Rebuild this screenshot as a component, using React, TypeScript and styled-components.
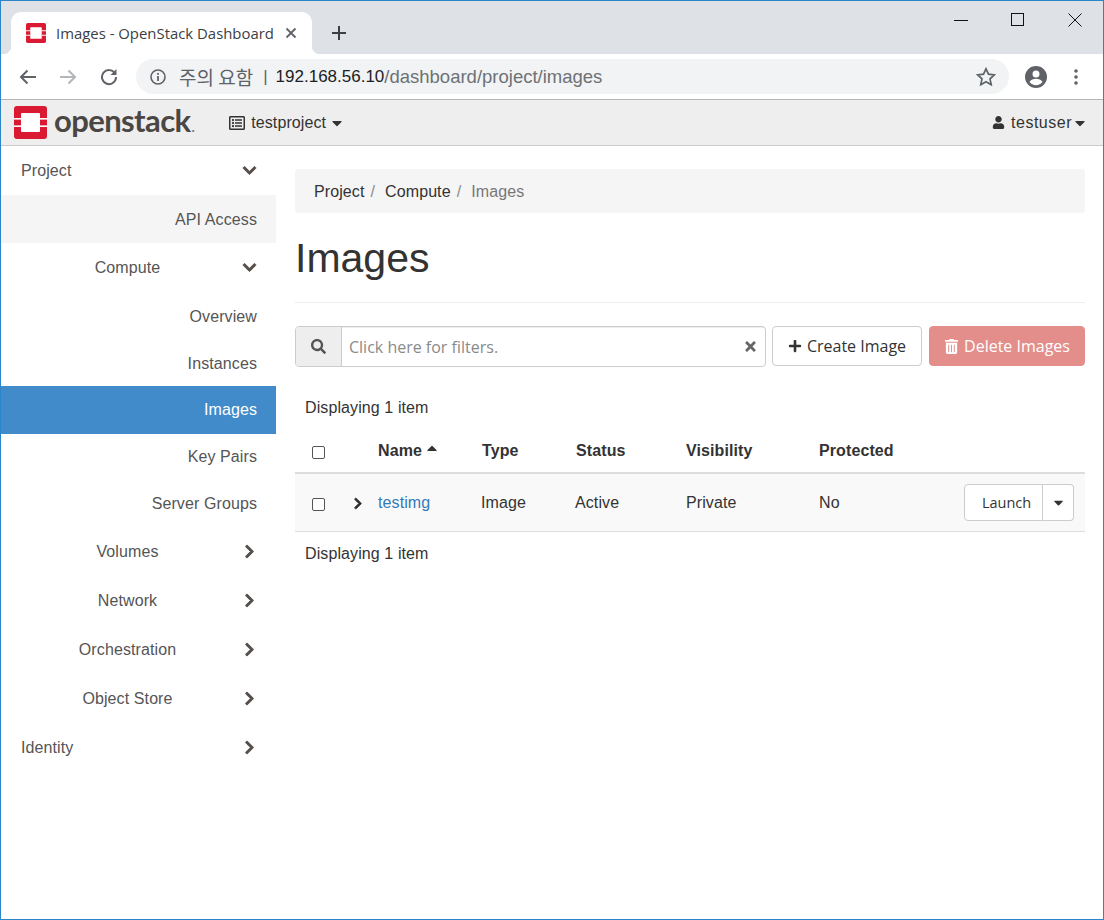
import styled, { createGlobalStyle } from "styled-components";
import { FaCaretDown, FaCaretUp, FaChevronDown, FaChevronRight, FaPlus, FaRegListAlt, FaSearch, FaTimes, FaTrashAlt, FaUser } from "react-icons/fa";

const Global = createGlobalStyle`
  html, body { margin: 0; padding: 0; background: #fff; }
  * { box-sizing: border-box; }
`;

const Win = styled.div`
  width: 1104px;
  height: 920px;
  border: 1px solid #2b85c9;
  display: flex;
  flex-direction: column;
  overflow: hidden;
  font-family: "Liberation Sans", Arial, sans-serif;
  font-size: 16px;
  letter-spacing: 0.1px;
  color: #333;
`;

const TabStrip = styled.div`
  height: 53px;
  background: #dee1e6;
  display: flex;
  align-items: flex-end;
  padding-left: 10px;
`;

const Tab = styled.div`
  position: relative;
  width: 301px;
  height: 42px;
  background: #fff;
  border-radius: 10px 10px 0 0;
  display: flex;
  align-items: center;
  padding: 0 15px 0 15px;
  gap: 10px;

  &::before,
  &::after {
    content: "";
    position: absolute;
    bottom: 0;
    width: 8px;
    height: 8px;
  }
  &::before {
    left: -8px;
    background: radial-gradient(circle at 0 0, transparent 8px, #fff 8.5px);
  }
  &::after {
    right: -8px;
    background: radial-gradient(circle at 100% 0, transparent 8px, #fff 8.5px);
  }
`;

const TabTitle = styled.span`
  font-family: "Open Sans", sans-serif;
  font-size: 14.9px;
  letter-spacing: 0;
  color: #3c4043;
  flex: 1;
  white-space: nowrap;
`;

const NewTab = styled.div`
  width: 20px;
  height: 42px;
  margin-left: 17px;
  display: flex;
  align-items: center;
  justify-content: center;
`;

const WinControls = styled.div`
  margin-left: auto;
  align-self: flex-start;
  display: flex;
`;

const WinBtn = styled.div`
  width: 57px;
  height: 38px;
  display: flex;
  align-items: center;
  justify-content: center;
`;

const Toolbar = styled.div`
  height: 46px;
  background: #fff;
  border-bottom: 1px solid #b4b4b4;
  display: flex;
  align-items: center;
  padding: 0 17px 0 15px;
`;

const NavBtn = styled.div`
  width: 24px;
  height: 24px;
  margin-right: 16px;
  display: flex;
  align-items: center;
  justify-content: center;
`;

const Omnibox = styled.div`
  width: 873px;
  height: 35px;
  background: #f1f3f4;
  border-radius: 18px;
  display: flex;
  align-items: center;
  padding: 0 13px 0 14px;
  font-size: 17px;
  letter-spacing: 0;
  white-space: nowrap;
`;

const Warning = styled.span`
  font-family: "Noto Sans CJK KR", sans-serif;
  font-size: 19px;
  color: #5f6368;
  margin-left: 13px;
`;

const Sep = styled.span`
  color: #5f6368;
  margin: 0 8px 0 10px;
`;

const Host = styled.span`
  color: #202124;
`;

const Path = styled.span`
  color: #6d7175;
  font-size: 18.5px;
  flex: 1;
`;

const Profile = styled.div`
  margin-left: 16px;
  display: flex;
  align-items: center;
  gap: 27px;
`;

const TopNav = styled.div`
  height: 46px;
  background: #eee;
  border-bottom: 1px solid #ccc;
  display: flex;
  align-items: center;
  padding: 0 15px 0 13px;
`;

const Wordmark = styled.span`
  font-family: "Lato", sans-serif;
  font-weight: 700;
  font-size: 31px;
  color: #4a4643;
  letter-spacing: -0.6px;
  margin-left: 7px;
  line-height: 1;
  position: relative;
  top: -2px;
`;

const Dot = styled.span`
  font-size: 14px;
  color: #7b7773;
  margin-left: 1px;
`;

const NavMenu = styled.div<{ $push?: boolean }>`
  display: flex;
  align-items: center;
  color: #333;
  margin-left: ${(p) => (p.$push ? "auto" : "35px")};
  gap: 6px;
  letter-spacing: ${(p) => (p.$push ? "0.5px" : "0.1px")};
  svg { flex: none; }
  svg:last-child { margin-left: ${(p) => (p.$push ? "-6px" : "-3px")}; }
`;

const Body = styled.div`
  flex: 1;
  display: flex;
  min-height: 0;
`;

const Sidebar = styled.nav`
  width: 275px;
  flex: none;
`;

const SideRow = styled.div<{ $h: number; $pt?: number; $active?: boolean; $shade?: boolean }>`
  height: ${(p) => p.$h}px;
  display: flex;
  align-items: center;
  padding: ${(p) => p.$pt ?? 0}px 18px 0 20px;
  background: ${(p) => (p.$active ? "#428bca" : p.$shade ? "#f5f5f5" : "transparent")};
  color: ${(p) => (p.$active ? "#fff" : "#555")};
`;

const SideLabel = styled.span<{ $align: "left" | "center" | "right" }>`
  flex: 1;
  text-align: ${(p) => p.$align};
  padding-right: ${(p) => (p.$align === "center" ? "6px" : "1px")};
`;

const SideChev = styled.span`
  width: 18px;
  display: flex;
  justify-content: center;
  color: #564f4a;
  svg {
    stroke: currentColor;
    stroke-width: 30;
  }
`;

const Main = styled.main`
  flex: 1;
  padding: 23px 18px 0 19px;
`;

const Crumbs = styled.div`
  height: 44px;
  background: #f5f5f5;
  border-radius: 4px;
  display: flex;
  align-items: center;
  padding: 2px 19px 0;
`;

const Crumb = styled.span<{ $muted?: boolean }>`
  color: ${(p) => (p.$muted ? "#777" : "#333")};
`;

const CrumbSep = styled.span`
  color: #8a8a8a;
  padding: 0 10px 0 6px;
`;

const Title = styled.h1`
  margin: 0;
  height: 90px;
  border-bottom: 1px solid #eee;
  font-size: 41px;
  font-weight: 400;
  letter-spacing: 0;
  line-height: 46px;
  padding-top: 22px;
  color: #333;
`;

const Actions = styled.div`
  margin-top: 23px;
  display: flex;
  gap: 6px;
  height: 41px;
`;

const FilterGroup = styled.div`
  width: 471px;
  display: flex;
  border: 1px solid #ccc;
  border-radius: 4px;
  overflow: hidden;
`;

const FilterAddon = styled.div`
  width: 46px;
  background: #eee;
  border-right: 1px solid #ccc;
  display: flex;
  align-items: center;
  justify-content: center;
  color: #555;
`;

const FilterInput = styled.div`
  flex: 1;
  display: flex;
  align-items: center;
  justify-content: space-between;
  padding: 0 7px 0 7px;
  font-family: "Open Sans", sans-serif;
  font-size: 16px;
  letter-spacing: 0;
  color: #8a8a8a;
  box-shadow: inset 0 1px 1px rgba(0, 0, 0, 0.075);
  svg { color: #666; }
`;

const Btn = styled.div<{ $danger?: boolean }>`
  width: ${(p) => (p.$danger ? "156px" : "150px")};
  margin-left: ${(p) => (p.$danger ? "1px" : "0")};
  height: 40px;
  border: 1px solid ${(p) => (p.$danger ? "#e48e8b" : "#ccc")};
  background: ${(p) => (p.$danger ? "#e48e8b" : "#fff")};
  color: ${(p) => (p.$danger ? "#fff" : "#333")};
  border-radius: 4px;
  display: flex;
  align-items: center;
  justify-content: center;
  gap: 5px;
  font-family: "Open Sans", sans-serif;
  font-size: 16px;
  letter-spacing: 0;
`;

const Count = styled.div<{ $top?: boolean }>`
  padding: 0 10px;
  margin-top: ${(p) => (p.$top ? "32px" : "0")};
  color: #333;
`;

const Table = styled.table`
  width: 790px;
  border-collapse: collapse;
  table-layout: fixed;
  margin: 13px 0 13px;
`;

const Th = styled.th`
  height: 43px;
  padding: 0 8px;
  border-bottom: 2px solid #ddd;
  text-align: left;
  font-weight: 700;
  white-space: nowrap;
`;

const Td = styled.td<{ $pl?: number }>`
  height: 58px;
  padding: 2px 8px 0 ${(p) => p.$pl ?? 8}px;
  background: #f9f9f9;
  border-bottom: 1px solid #ddd;
  color: #333;
`;

const Check = styled.span`
  display: block;
  width: 13px;
  height: 13px;
  margin: 2px 0 0 9px;
  border: 1.5px solid #555;
  border-radius: 2px;
  background: #fff;
`;

const Link = styled.a`
  color: #337ab7;
`;

const Expander = styled.span`
  display: flex;
  margin-left: 1px;
  color: #333;
  svg {
    stroke: currentColor;
    stroke-width: 30;
  }
`;

const SortHead = styled.span`
  display: inline-flex;
  align-items: center;
  height: 18px;
  gap: 2px;
  svg { margin-top: -7px; }
`;

const RowActions = styled.div`
  display: flex;
  justify-content: flex-end;
  margin-top: -2px;
  padding-right: 3px;
`;

const SplitMain = styled.div`
  width: 79px;
  height: 37px;
  padding-left: 6px;
  border: 1px solid #ccc;
  border-radius: 4px 0 0 4px;
  background: #fff;
  display: flex;
  align-items: center;
  justify-content: center;
  font-family: "Open Sans", sans-serif;
  font-size: 14.5px;
  letter-spacing: 0;
  color: #333;
`;

const SplitCaret = styled.div`
  width: 31px;
  height: 37px;
  padding-left: 1px;
  border: 1px solid #ccc;
  border-left: 0;
  border-radius: 0 4px 4px 0;
  background: #fff;
  display: flex;
  align-items: center;
  justify-content: center;
`;

const Logo = ({ size }: { size: number }) => (
  <svg width={size} height={size} viewBox="0 0 33 33" style={{ flex: "none" }}>
    <rect width="33" height="33" rx="3" fill="#da1a32" />
    <rect x="7" y="7" width="19" height="19" rx="1" fill="#fff" />
    <rect x="0" y="12" width="7" height="1.6" fill="#fff" />
    <rect x="0" y="19.400" width="7" height="1.6" fill="#fff" />
    <rect x="26" y="12" width="7" height="1.6" fill="#fff" />
    <rect x="26" y="19.400" width="7" height="1.6" fill="#fff" />
  </svg>
);

const sideItems = [
  { label: "Project", h: 49, align: "left", chev: "down" },
  { label: "API Access", h: 48, pt: 2, align: "right", shade: true },
  { label: "Compute", h: 49, align: "center", chev: "down" },
  { label: "Overview", h: 48, pt: 2, align: "right" },
  { label: "Instances", h: 46, pt: 2, align: "right" },
  { label: "Images", h: 48, align: "right", active: true },
  { label: "Key Pairs", h: 46, align: "right" },
  { label: "Server Groups", h: 47, align: "right" },
  { label: "Volumes", h: 49, align: "center", chev: "right" },
  { label: "Network", h: 49, align: "center", chev: "right" },
  { label: "Orchestration", h: 49, align: "center", chev: "right" },
  { label: "Object Store", h: 49, align: "center", chev: "right" },
  { label: "Identity", h: 49, align: "left", chev: "right" },
] as const;

export default function App() {
  return (
    <Win>
      <Global />
      <TabStrip>
        <Tab>
          <Logo size={20} />
          <TabTitle>Images - OpenStack Dashboard</TabTitle>
          <svg width="12" height="12" viewBox="0 0 12 12">
            <path d="M1.5 1.5l9 9M10.5 1.5l-9 9" stroke="#5f6368" strokeWidth="1.8" />
          </svg>
        </Tab>
        <NewTab>
          <svg width="14" height="14" viewBox="0 0 14 14">
            <path d="M7 0v14M0 7h14" stroke="#3c4043" strokeWidth="2" />
          </svg>
        </NewTab>
        <WinControls>
          <WinBtn>
            <svg width="14" height="14" viewBox="0 0 14 14">
              <path d="M0 7.5h14" stroke="#111" />
            </svg>
          </WinBtn>
          <WinBtn>
            <svg width="14" height="14" viewBox="0 0 14 14">
              <rect x="0.5" y="0.5" width="12" height="12" fill="none" stroke="#111" />
            </svg>
          </WinBtn>
          <WinBtn>
            <svg width="14" height="14" viewBox="0 0 14 14">
              <path d="M0.5 0.5l13 13M13.5 0.5l-13 13" stroke="#111" />
            </svg>
          </WinBtn>
        </WinControls>
      </TabStrip>
      <Toolbar>
        <NavBtn>
          <svg width="18" height="16" viewBox="0 0 18 16">
            <path d="M17 8H2M8.5 1.5L2 8l6.5 6.5" fill="none" stroke="#5f6368" strokeWidth="2" />
          </svg>
        </NavBtn>
        <NavBtn>
          <svg width="18" height="16" viewBox="0 0 18 16">
            <path d="M1 8h15M9.500 1.500L16 8l-6.500 6.500" fill="none" stroke="#b3b6ba" strokeWidth="2" />
          </svg>
        </NavBtn>
        <NavBtn>
          <svg width="18" height="18" viewBox="-1 0 18 18">
            <path d="M15 5.500A7 7 0 1 0 16 9" fill="none" stroke="#5f6368" strokeWidth="2" />
            <path d="M16.500 1v6h-6z" fill="#5f6368" />
          </svg>
        </NavBtn>
        <Omnibox>
          <svg width="16" height="16" viewBox="0 0 16 16" style={{ flex: "none" }}>
            <circle cx="8" cy="8" r="7" fill="none" stroke="#5f6368" strokeWidth="1.6" />
            <path d="M8 7v5" stroke="#5f6368" strokeWidth="1.8" />
            <path d="M8 4v1.800" stroke="#5f6368" strokeWidth="1.800" />
          </svg>
          <Warning>주의 요함</Warning>
          <Sep>|</Sep>
          <Host>192.168.56.10</Host>
          <Path>/dashboard/project/images</Path>
          <svg width="20" height="19" viewBox="0 0 20 19" style={{ flex: "none" }}>
            <path d="M10 1.800l2.500 5.400 5.800.7-4.300 4 1.200 5.800-5.200-3-5.200 3 1.200-5.800-4.300-4 5.800-.7z" fill="none" stroke="#5f6368" strokeWidth="1.700" />
          </svg>
        </Omnibox>
        <Profile>
          <svg width="22" height="22" viewBox="0 0 22 22">
            <circle cx="11" cy="11" r="11" fill="#5f6368" />
            <circle cx="11" cy="8" r="3.500" fill="#fff" />
            <path d="M4.500 16c1.300-2.300 4-3.200 6.500-3.200s5.200.9 6.500 3.200a8.200 8.200 0 0 1-13 0z" fill="#fff" />
          </svg>
          <svg width="4" height="16" viewBox="0 0 4 16">
            <circle cx="2" cy="2" r="1.800" fill="#5f6368" />
            <circle cx="2" cy="8" r="1.800" fill="#5f6368" />
            <circle cx="2" cy="14" r="1.800" fill="#5f6368" />
          </svg>
        </Profile>
      </Toolbar>
      <TopNav>
        <Logo size={33} />
        <Wordmark>
          openstack<Dot>.</Dot>
        </Wordmark>
        <NavMenu>
          <FaRegListAlt size={16} />
          <span>testproject</span>
          <FaCaretDown size={16} />
        </NavMenu>
        <NavMenu $push>
          <FaUser size={13} />
          <span>testuser</span>
          <FaCaretDown size={16} />
        </NavMenu>
      </TopNav>
      <Body>
        <Sidebar>
          {sideItems.map((item) => {
            const chev = "chev" in item ? item.chev : undefined;
            return (
              <SideRow
                key={item.label}
                $h={item.h}
                $pt={"pt" in item ? item.pt : 0}
                $active={"active" in item}
                $shade={"shade" in item}
              >
                <SideLabel $align={item.align}>{item.label}</SideLabel>
                {chev && (
                  <SideChev>
                    {chev === "down" ? <FaChevronDown size={15} /> : <FaChevronRight size={15} />}
                  </SideChev>
                )}
              </SideRow>
            );
          })}
        </Sidebar>
        <Main>
          <Crumbs>
            <Crumb>Project</Crumb>
            <CrumbSep>/</CrumbSep>
            <Crumb>Compute</Crumb>
            <CrumbSep>/</CrumbSep>
            <Crumb $muted>Images</Crumb>
          </Crumbs>
          <Title>Images</Title>
          <Actions>
            <FilterGroup>
              <FilterAddon>
                <FaSearch size={15} />
              </FilterAddon>
              <FilterInput>
                Click here for filters.
                <FaTimes size={15} />
              </FilterInput>
            </FilterGroup>
            <Btn>
              <FaPlus size={14} />
              Create Image
            </Btn>
            <Btn $danger>
              <FaTrashAlt size={15} />
              Delete Images
            </Btn>
          </Actions>
          <Count $top>Displaying 1 item</Count>
          <Table>
            <colgroup>
              <col width="50" />
              <col width="25" />
              <col width="104" />
              <col width="94" />
              <col width="110" />
              <col width="133" />
              <col width="110" />
              <col />
            </colgroup>
            <thead>
              <tr>
                <Th><Check /></Th>
                <Th />
                <Th>
                  <SortHead>
                    Name
                    <FaCaretUp size={16} />
                  </SortHead>
                </Th>
                <Th>Type</Th>
                <Th>Status</Th>
                <Th>Visibility</Th>
                <Th>Protected</Th>
                <Th />
              </tr>
            </thead>
            <tbody>
              <tr>
                <Td><Check /></Td>
                <Td>
                  <Expander><FaChevronRight size={15} /></Expander>
                </Td>
                <Td><Link>testimg</Link></Td>
                <Td $pl={7}>Image</Td>
                <Td $pl={7}>Active</Td>
                <Td>Private</Td>
                <Td>No</Td>
                <Td>
                  <RowActions>
                    <SplitMain>Launch</SplitMain>
                    <SplitCaret><FaCaretDown size={15} /></SplitCaret>
                  </RowActions>
                </Td>
              </tr>
            </tbody>
          </Table>
          <Count>Displaying 1 item</Count>
        </Main>
      </Body>
    </Win>
  );
}
